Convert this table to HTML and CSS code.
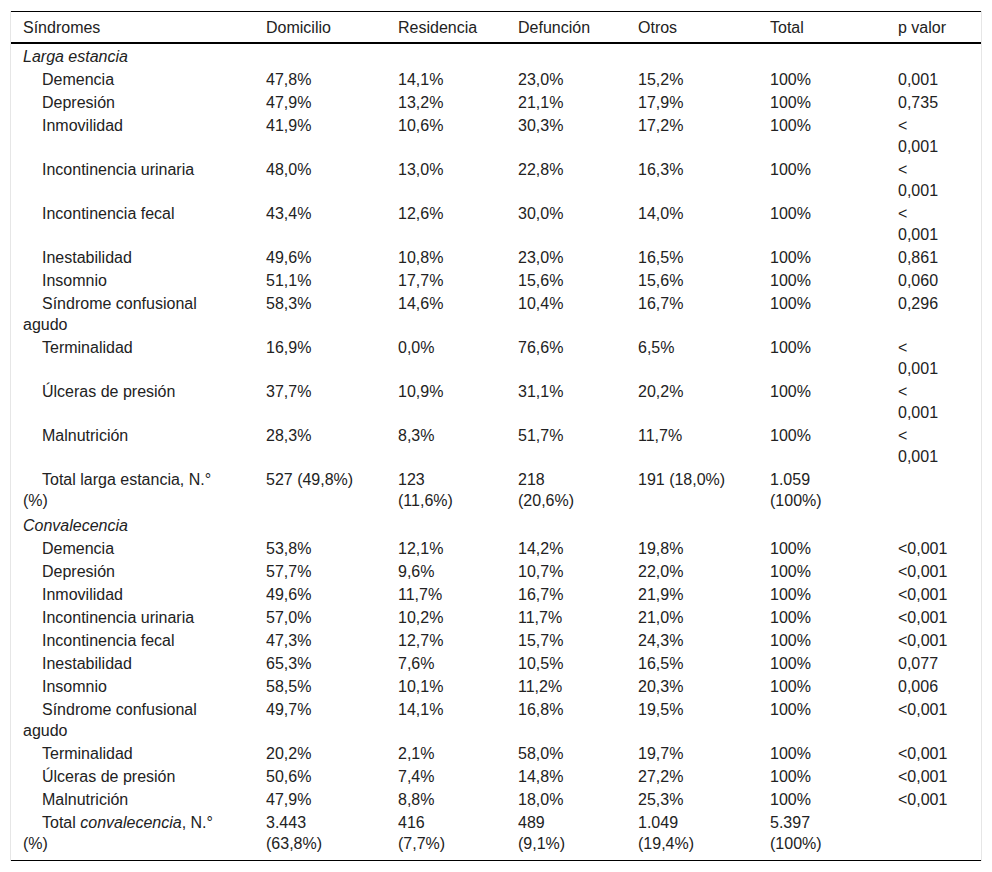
FILE: index.html
```html
<!DOCTYPE html>
<html lang="es">
<head>
<meta charset="utf-8">
<title>Síndromes</title>
<link rel="stylesheet" href="styles.css">
</head>
<body>
<div class="wrap">
<table class="tbl">
<thead>
<tr>
<th class="c1">Síndromes</th>
<th class="c2">Domicilio</th>
<th class="c3">Residencia</th>
<th class="c4">Defunción</th>
<th class="c5">Otros</th>
<th class="c6">Total</th>
<th class="c7">p valor</th>
</tr>
</thead>
<tbody>
<tr class="first"><td class="sec" colspan="7">Larga estancia</td></tr>
<tr><td class="ind">Demencia</td><td>47,8%</td><td class="nw">14,1%</td><td class="nw">23,0%</td><td>15,2%</td><td>100%</td><td class="pv">0,001</td></tr>
<tr><td class="ind">Depresión</td><td>47,9%</td><td class="nw">13,2%</td><td class="nw">21,1%</td><td>17,9%</td><td>100%</td><td class="pv">0,735</td></tr>
<tr><td class="ind">Inmovilidad</td><td>41,9%</td><td class="nw">10,6%</td><td class="nw">30,3%</td><td>17,2%</td><td>100%</td><td class="pv">&lt; 0,001</td></tr>
<tr><td class="ind">Incontinencia urinaria</td><td>48,0%</td><td class="nw">13,0%</td><td class="nw">22,8%</td><td>16,3%</td><td>100%</td><td class="pv">&lt; 0,001</td></tr>
<tr><td class="ind">Incontinencia fecal</td><td>43,4%</td><td class="nw">12,6%</td><td class="nw">30,0%</td><td>14,0%</td><td>100%</td><td class="pv">&lt; 0,001</td></tr>
<tr><td class="ind">Inestabilidad</td><td>49,6%</td><td class="nw">10,8%</td><td class="nw">23,0%</td><td>16,5%</td><td>100%</td><td class="pv">0,861</td></tr>
<tr><td class="ind">Insomnio</td><td>51,1%</td><td class="nw">17,7%</td><td class="nw">15,6%</td><td>15,6%</td><td>100%</td><td class="pv">0,060</td></tr>
<tr><td class="ind">Síndrome confusional agudo</td><td>58,3%</td><td class="nw">14,6%</td><td class="nw">10,4%</td><td>16,7%</td><td>100%</td><td class="pv">0,296</td></tr>
<tr><td class="ind">Terminalidad</td><td>16,9%</td><td class="nw">0,0%</td><td class="nw">76,6%</td><td>6,5%</td><td>100%</td><td class="pv">&lt; 0,001</td></tr>
<tr><td class="ind">Úlceras de presión</td><td>37,7%</td><td class="nw">10,9%</td><td class="nw">31,1%</td><td>20,2%</td><td>100%</td><td class="pv">&lt; 0,001</td></tr>
<tr><td class="ind">Malnutrición</td><td>28,3%</td><td class="nw">8,3%</td><td class="nw">51,7%</td><td>11,7%</td><td>100%</td><td class="pv">&lt; 0,001</td></tr>
<tr class="subtotal"><td class="ind">Total larga estancia, N.° (%)</td><td>527 (49,8%)</td><td class="nw">123 (11,6%)</td><td class="nw">218 (20,6%)</td><td>191 (18,0%)</td><td>1.059 (100%)</td><td class="pv"></td></tr>
<tr class="section"><td class="sec" colspan="7">Convalecencia</td></tr>
<tr><td class="ind">Demencia</td><td>53,8%</td><td class="nw">12,1%</td><td class="nw">14,2%</td><td>19,8%</td><td>100%</td><td class="pv">&lt;0,001</td></tr>
<tr><td class="ind">Depresión</td><td>57,7%</td><td class="nw">9,6%</td><td class="nw">10,7%</td><td>22,0%</td><td>100%</td><td class="pv">&lt;0,001</td></tr>
<tr><td class="ind">Inmovilidad</td><td>49,6%</td><td class="nw">11,7%</td><td class="nw">16,7%</td><td>21,9%</td><td>100%</td><td class="pv">&lt;0,001</td></tr>
<tr><td class="ind">Incontinencia urinaria</td><td>57,0%</td><td class="nw">10,2%</td><td class="nw">11,7%</td><td>21,0%</td><td>100%</td><td class="pv">&lt;0,001</td></tr>
<tr><td class="ind">Incontinencia fecal</td><td>47,3%</td><td class="nw">12,7%</td><td class="nw">15,7%</td><td>24,3%</td><td>100%</td><td class="pv">&lt;0,001</td></tr>
<tr><td class="ind">Inestabilidad</td><td>65,3%</td><td class="nw">7,6%</td><td class="nw">10,5%</td><td>16,5%</td><td>100%</td><td class="pv">0,077</td></tr>
<tr><td class="ind">Insomnio</td><td>58,5%</td><td class="nw">10,1%</td><td class="nw">11,2%</td><td>20,3%</td><td>100%</td><td class="pv">0,006</td></tr>
<tr><td class="ind">Síndrome confusional agudo</td><td>49,7%</td><td class="nw">14,1%</td><td class="nw">16,8%</td><td>19,5%</td><td>100%</td><td class="pv">&lt;0,001</td></tr>
<tr><td class="ind">Terminalidad</td><td>20,2%</td><td class="nw">2,1%</td><td class="nw">58,0%</td><td>19,7%</td><td>100%</td><td class="pv">&lt;0,001</td></tr>
<tr><td class="ind">Úlceras de presión</td><td>50,6%</td><td class="nw">7,4%</td><td class="nw">14,8%</td><td>27,2%</td><td>100%</td><td class="pv">&lt;0,001</td></tr>
<tr><td class="ind">Malnutrición</td><td>47,9%</td><td class="nw">8,8%</td><td class="nw">18,0%</td><td>25,3%</td><td>100%</td><td class="pv">&lt;0,001</td></tr>
<tr class="last"><td class="ind">Total <em>convalecencia</em>, N.° (%)</td><td>3.443 (63,8%)</td><td class="nw">416 (7,7%)</td><td class="nw">489 (9,1%)</td><td>1.049 (19,4%)</td><td>5.397 (100%)</td><td class="pv"></td></tr>
</tbody>
</table>
</div>
</body>
</html>
```

FILE: styles.css
```css
html, body {
  margin: 0;
  padding: 0;
  background: #fff;
}

body {
  font-family: "Liberation Sans", Arial, sans-serif;
  font-size: 16px;
  color: #222;
}

.wrap {
  margin: 11px 0 0 10px;
  width: 970px;
  border-left: 1px solid #e6e6e6;
  border-right: 1px solid #e6e6e6;
}

.tbl {
  width: 970px;
  table-layout: fixed;
  border-collapse: collapse;
  border-top: 1px solid #000;
  border-bottom: 1px solid #000;
}

.tbl th,
.tbl td {
  box-sizing: border-box;
  text-align: left;
  vertical-align: top;
  font-weight: normal;
  line-height: 21px;
  padding: 1px 26px 1px 12px;
}

.tbl thead th {
  padding-top: 5px;
  padding-bottom: 4px;
  border-bottom: 2px solid #000;
}

.c1 { width: 243px; }
.c2 { width: 132px; }
.c3 { width: 120px; }
.c4 { width: 120px; }
.c5 { width: 132px; }
.c6 { width: 128px; }
.c7 { width: 95px; }

.tbl td.nw {
  padding-right: 32px;
}

.tbl th.c7,
.tbl td.pv {
  padding-right: 32px;
}

.tbl td.sec {
  font-style: italic;
}

.tbl td.ind {
  text-indent: 19px;
}

.tbl tr.first td {
  padding-top: 2px;
}

.tbl tr.subtotal td {
  padding-bottom: 2px;
}

.tbl tr.section td {
  padding-top: 2px;
}

.tbl tr.last td {
  padding-bottom: 6px;
}
```
